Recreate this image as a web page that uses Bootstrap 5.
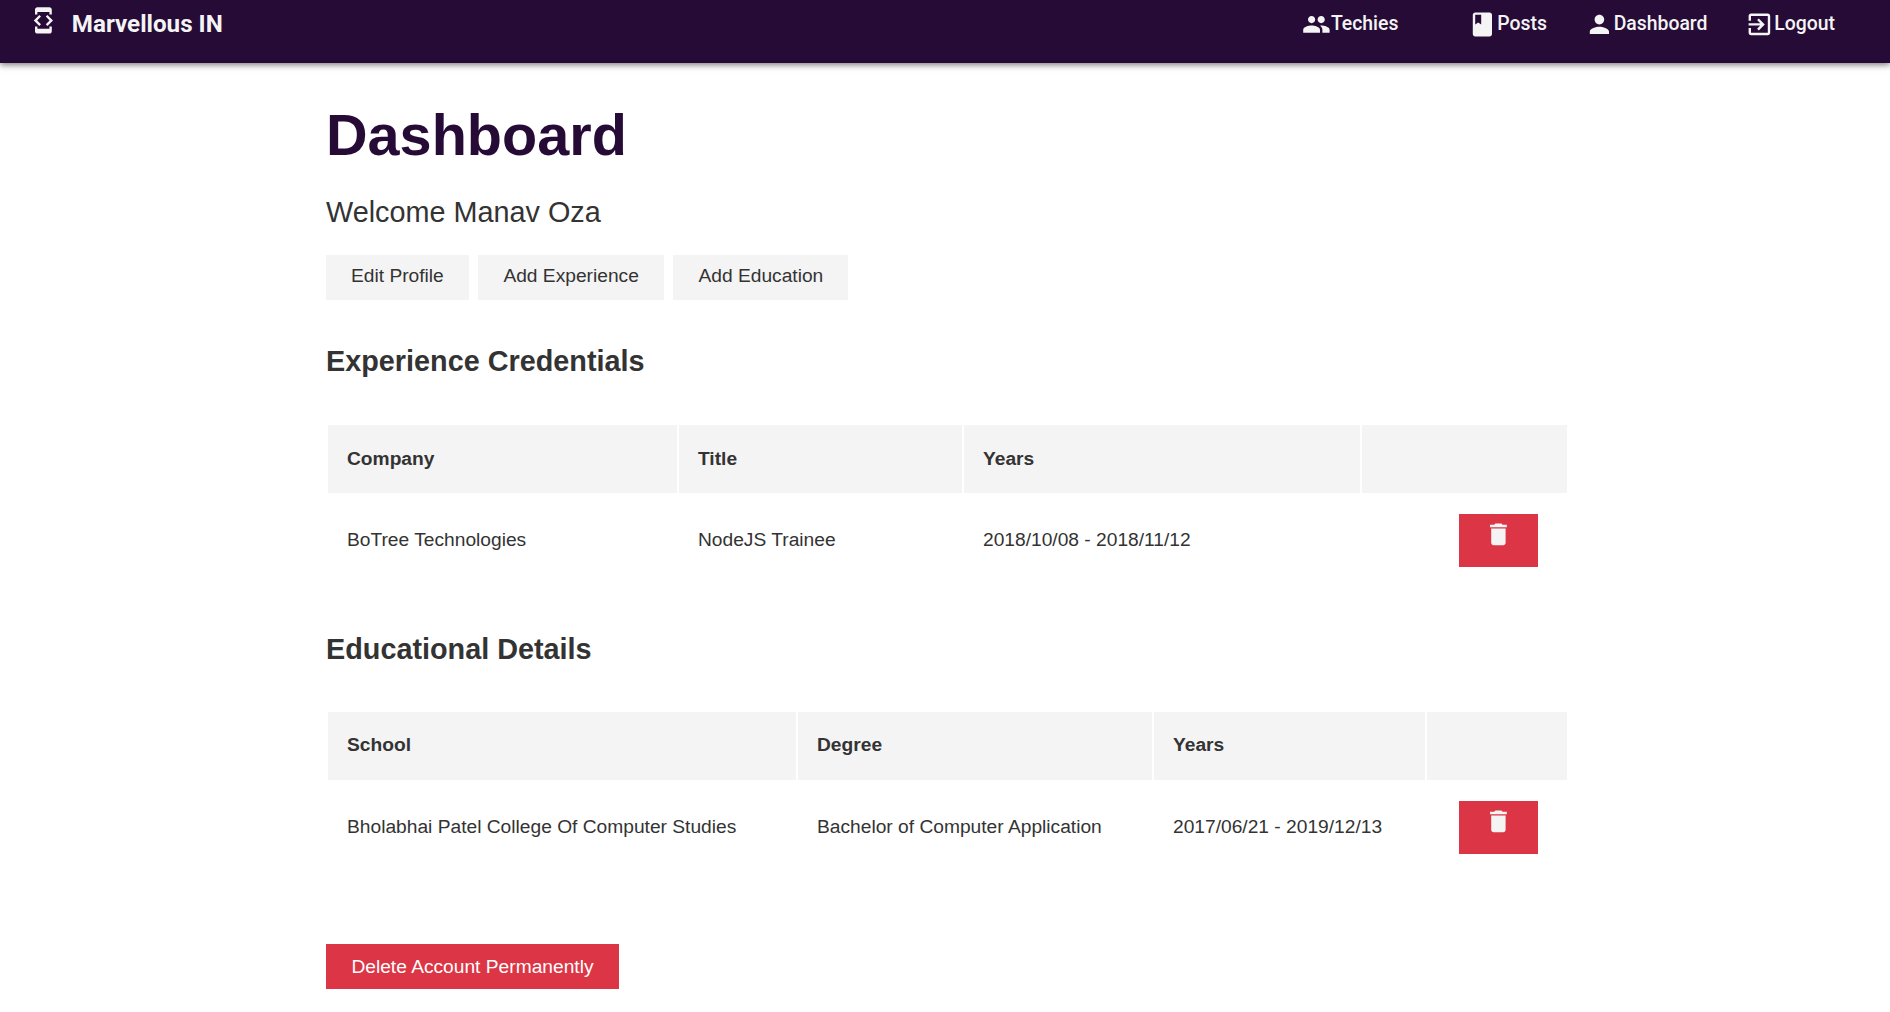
<!DOCTYPE html>
<html lang="en">
<head>
<meta charset="utf-8">
<title>Marvellous IN</title>
<link rel="stylesheet" href="https://cdn.jsdelivr.net/npm/bootstrap@5.3.0/dist/css/bootstrap.min.css">
<style>
html,body{height:1012px;overflow:hidden}
body{font-family:"Liberation Sans",Arial,sans-serif;color:#333;background:#fff}
.topbar{background:#260b37;height:63px;padding:0 55px 0 29px;box-shadow:0 2px 6px rgba(0,0,0,.5);color:#fff;font-family:Roboto,sans-serif}
.brandlink{font-size:24.2px;font-weight:700;color:#f4f4f4;text-decoration:none;line-height:1;margin-top:-15px}
.brandlink svg{margin-right:14px;margin-bottom:8px}
.toplinks{margin-top:-15px;font-size:19.4px;font-weight:500;line-height:1}
.toplinks a{color:#f4f4f4;text-decoration:none;display:flex;align-items:center;margin-left:38px}
.toplinks a:first-child{margin-right:32px}
.glyph{width:28.800px;height:28.800px;flex:none;fill:#f4f4f4}
.page{width:1243px;margin-left:326px;padding-top:38px}
.headline{font-size:57.6px;font-weight:700;color:#260b37;line-height:1.2;margin:0}
.welcome{font-size:28.8px;line-height:1.2;margin:25px 0 25px 0}
.softbtn{background:#f4f4f4;color:#333;border:0;border-radius:0;font-size:19.2px;padding:0 25px;height:45px;line-height:42px;margin-right:9.600px}
.softbtn:hover{background:#f4f4f4;color:#333}
.sect{font-size:28.8px;font-weight:700;line-height:1.2;margin:44px 0 0}
.datatable{width:100%;table-layout:fixed;border-collapse:separate;border-spacing:2px;font-size:19.2px;margin:0}
.datatable th{background:#f4f4f4;height:68px;padding:0 19px;font-weight:700;vertical-align:middle}
.datatable td{height:91px;padding:0 19px;vertical-align:middle;border:0;color:#333}
.dtone{margin-top:45px}
.dttwo{margin-top:43px}
.w1a{width:349px}.w1b{width:283px}.w1c{width:396px}
.w2a{width:468px}.w2b{width:354px}.w2c{width:271px}
.trashbtn{background:#dc3545;border:0;border-radius:0;width:79px;height:53px;padding:6px 0 0;display:flex;align-items:flex-start;justify-content:center;margin:0 10px 0 auto}
.dangerbtn{background:#dc3545;border:0;border-radius:0;color:#fff;font-size:19.2px;height:45px;padding:0 25.400px;line-height:45px;margin-top:69px}
.dangerbtn:hover{background:#dc3545;color:#fff}
</style>
</head>
<body>
<nav class="topbar d-flex align-items-center justify-content-between">
  <a class="brandlink d-flex align-items-center" href="#">
    <svg class="glyph" viewBox="0 0 24 24"><path d="M7 5h10v2h2V3c0-1.100-.9-1.990-2-1.990L7 1c-1.100 0-2 .9-2 2v4h2V5zm8.410 11.590L20 12l-4.590-4.590L14 8.830 17.170 12 14 15.170l1.410 1.420zM10 15.170 6.830 12 10 8.830 8.590 7.410 4 12l4.590 4.590L10 15.170zM17 19H7v-2H5v4c0 1.100.9 2 2 2h10c1.100 0 2-.9 2-2v-4h-2v2z"/></svg>
    Marvellous IN
  </a>
  <div class="toplinks d-flex">
    <a href="#"><svg class="glyph" viewBox="0 0 24 24"><path d="M16 11c1.660 0 2.990-1.340 2.990-3S17.660 5 16 5c-1.660 0-3 1.340-3 3s1.340 3 3 3zm-8 0c1.660 0 2.990-1.340 2.990-3S9.660 5 8 5C6.340 5 5 6.340 5 8s1.340 3 3 3zm0 2c-2.330 0-7 1.170-7 3.500V19h14v-2.500c0-2.330-4.670-3.500-7-3.500zm8 0c-.29 0-.62.02-.97.05 1.160.84 1.970 1.970 1.970 3.450V19h6v-2.500c0-2.330-4.670-3.500-7-3.500z"/></svg><span>Techies</span></a>
    <a href="#"><svg class="glyph" viewBox="0 0 24 24"><path d="M18 2H6c-1.100 0-2 .9-2 2v16c0 1.100.9 2 2 2h12c1.100 0 2-.9 2-2V4c0-1.100-.9-2-2-2zM6 4h5v8l-2.500-1.500L6 12V4z"/></svg><span>Posts</span></a>
    <a href="#"><svg class="glyph" viewBox="0 0 24 24"><path d="M12 12c2.210 0 4-1.790 4-4s-1.790-4-4-4-4 1.790-4 4 1.790 4 4 4zm0 2c-2.670 0-8 1.340-8 4v2h16v-2c0-2.660-5.330-4-8-4z"/></svg><span>Dashboard</span></a>
    <a href="#"><svg class="glyph" viewBox="0 0 24 24"><path d="M10.090 15.590L11.500 17l5-5-5-5-1.410 1.410L12.670 11H3v2h9.670l-2.580 2.590zM19 3H5c-1.110 0-2 .9-2 2v4h2V5h14v14H5v-4H3v4c0 1.100.89 2 2 2h14c1.100 0 2-.9 2-2V5c0-1.100-.9-2-2-2z"/></svg><span>Logout</span></a>
  </div>
</nav>
<main class="page">
  <h1 class="headline">Dashboard</h1>
  <p class="welcome">Welcome Manav Oza</p>
  <div class="d-flex">
    <a class="btn softbtn" href="#">Edit Profile</a>
    <a class="btn softbtn" href="#">Add Experience</a>
    <a class="btn softbtn" href="#">Add Education</a>
  </div>
  <h2 class="sect">Experience Credentials</h2>
  <table class="datatable dtone">
    <thead><tr><th class="w1a">Company</th><th class="w1b">Title</th><th class="w1c">Years</th><th></th></tr></thead>
    <tbody><tr><td>BoTree Technologies</td><td>NodeJS Trainee</td><td>2018/10/08 - 2018/11/12</td>
      <td><button class="trashbtn" aria-label="Delete"><svg class="glyph trashicon" viewBox="0 0 24 24"><path d="M6 19c0 1.100.9 2 2 2h8c1.100 0 2-.9 2-2V7H6v12zM19 4h-3.500l-1-1h-5l-1 1H5v2h14V4z"/></svg></button></td></tr></tbody>
  </table>
  <h2 class="sect">Educational Details</h2>
  <table class="datatable dttwo">
    <thead><tr><th class="w2a">School</th><th class="w2b">Degree</th><th class="w2c">Years</th><th></th></tr></thead>
    <tbody><tr><td>Bholabhai Patel College Of Computer Studies</td><td>Bachelor of Computer Application</td><td>2017/06/21 - 2019/12/13</td>
      <td><button class="trashbtn" aria-label="Delete"><svg class="glyph trashicon" viewBox="0 0 24 24"><path d="M6 19c0 1.100.9 2 2 2h8c1.100 0 2-.9 2-2V7H6v12zM19 4h-3.500l-1-1h-5l-1 1H5v2h14V4z"/></svg></button></td></tr></tbody>
  </table>
  <a class="btn dangerbtn" href="#">Delete Account Permanently</a>
</main>
<script src="https://cdn.jsdelivr.net/npm/bootstrap@5.3.0/dist/js/bootstrap.bundle.min.js"></script>
</body>
</html>
